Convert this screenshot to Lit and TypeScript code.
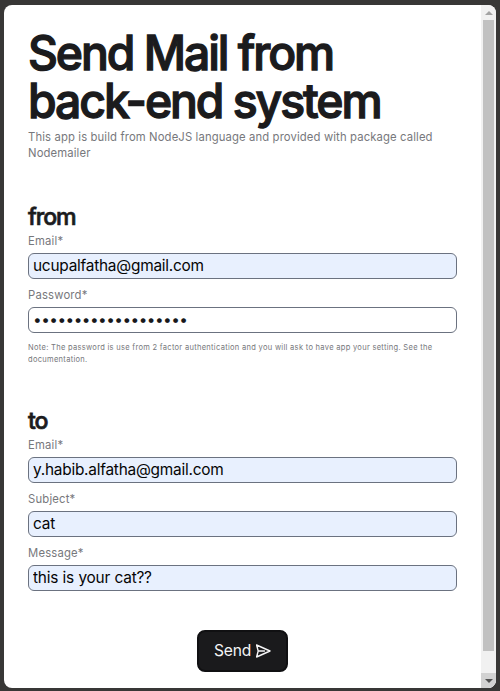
import { LitElement, html, css } from "lit";
import { customElement, property } from "lit/decorators.js";

@customElement("form-field")
class FormField extends LitElement {
  @property() label = "";
  @property() value = "";
  @property() type = "text";

  static styles = css`
    :host { display: block; margin-bottom: 8px; }
    label { display: block; height: 16px; margin-bottom: 4px; transform: scaleX(0.94); transform-origin: left; font: 12px/16px Inter, sans-serif; letter-spacing: 0.2px; color: #77787c; }
    input { display: block; box-sizing: border-box; width: 100%; height: 26px; margin: 0; padding: 0 4px 2px; border: 1px solid #6b7280; border-radius: 6px; outline: none; background: #e8f0fe; color: #050505; font: 15.4px/24px Inter, sans-serif; letter-spacing: -0.23px; word-spacing: 0.4px; }
    input[type="password"] { background: #fff; color: #18181b; letter-spacing: -0.53px; }
  `;

  render() {
    return html`<label for="field">${this.label}*</label>
      <input id="field" type=${this.type} .value=${this.value} />`;
  }
}

@customElement("app-root")
class AppRoot extends LitElement {
  static styles = css`
    :host { display: block; box-sizing: border-box; height: 691px; padding: 5px 4px 3px; background: #383736; font-family: Inter, sans-serif; }
    .panel { display: flex; height: 683px; border-radius: 8px; overflow: hidden; background: #fff; }
    main { box-sizing: border-box; width: 477px; padding: 24px 24px 0; }
    h1, h2, p { margin: 0; white-space: nowrap; transform: scaleX(0.94); transform-origin: left; }
    h1, h2 { transform: scaleX(0.965); font-weight: 500; color: #1b1b1d; }
    h1 { font-size: 48px; line-height: 48px; -webkit-text-stroke: 1.3px currentColor; letter-spacing: -2.13px; }
    .intro { margin-top: 4px; font-size: 12px; line-height: 16px; letter-spacing: 0.135px; color: #77787c; }
    section { height: 160px; margin-top: 44px; }
    h2 { margin-bottom: 4px; font-size: 24px; line-height: 24px; -webkit-text-stroke: 0.7px currentColor; letter-spacing: -1.1px; }
    .note { font-size: 8px; line-height: 12px; letter-spacing: 0.315px; color: #77787c; }
    .actions { display: flex; justify-content: center; margin-top: 61px; }
    button { display: flex; align-items: center; gap: 4px; box-sizing: border-box; width: 91px; height: 42px; padding: 0 15px; border: 2px solid #101012; border-radius: 8px; background: #1a1a1c; color: #f4f4f5; font: 15.6px/24px Inter, sans-serif; letter-spacing: -0.2px; }
    button span { margin-top: -1px; }
    button svg { flex: none; }
    .scrollbar { display: flex; flex-direction: column; width: 15px; background: #f1f1f1; }
    .arrow { display: flex; align-items: center; justify-content: center; height: 15px; }
    .down { background: #d2d2d2; }
    .track { flex: 1; }
    .thumb { width: 11px; height: 631px; margin: 0 2px; background: #c1c1c1; }
  `;

  render() {
    return html`<div class="panel">
      <main>
        <h1>Send Mail from<br />back-end system</h1>
        <p class="intro">This app is build from NodeJS language and provided with package called<br />Nodemailer</p>
        <section>
          <h2>from</h2>
          <form-field label="Email" value="ucupalfatha@gmail.com"></form-field>
          <form-field label="Password" type="password" value="nodemailer-password"></form-field>
          <p class="note">Note: The password is use from 2 factor authentication and you will ask to have app your setting. See the<br />documentation.</p>
        </section>
        <section>
          <h2>to</h2>
          <form-field label="Email" value="y.habib.alfatha@gmail.com"></form-field>
          <form-field label="Subject" value="cat"></form-field>
          <form-field label="Message" value="this is your cat??"></form-field>
        </section>
        <div class="actions">
          <button><span>Send</span>
            <svg width="16" height="16" viewBox="0 0 16 16" fill="none" stroke="currentColor" stroke-width="1.4" stroke-linejoin="round" stroke-linecap="round"><path d="M1.6 2 15 8 1.6 14 3.2 8ZM3.2 8H9.5" /></svg>
          </button>
        </div>
      </main>
      <div class="scrollbar">
        <div class="arrow"><svg width="8" height="4" viewBox="0 0 8 4"><path fill="#a3a3a3" d="M0 4 4 0 8 4Z" /></svg></div>
        <div class="track"><div class="thumb"></div></div>
        <div class="arrow down"><svg width="8" height="4" viewBox="0 0 8 4"><path fill="#505050" d="M0 0H8L4 4Z" /></svg></div>
      </div>
    </div>`;
  }
}
